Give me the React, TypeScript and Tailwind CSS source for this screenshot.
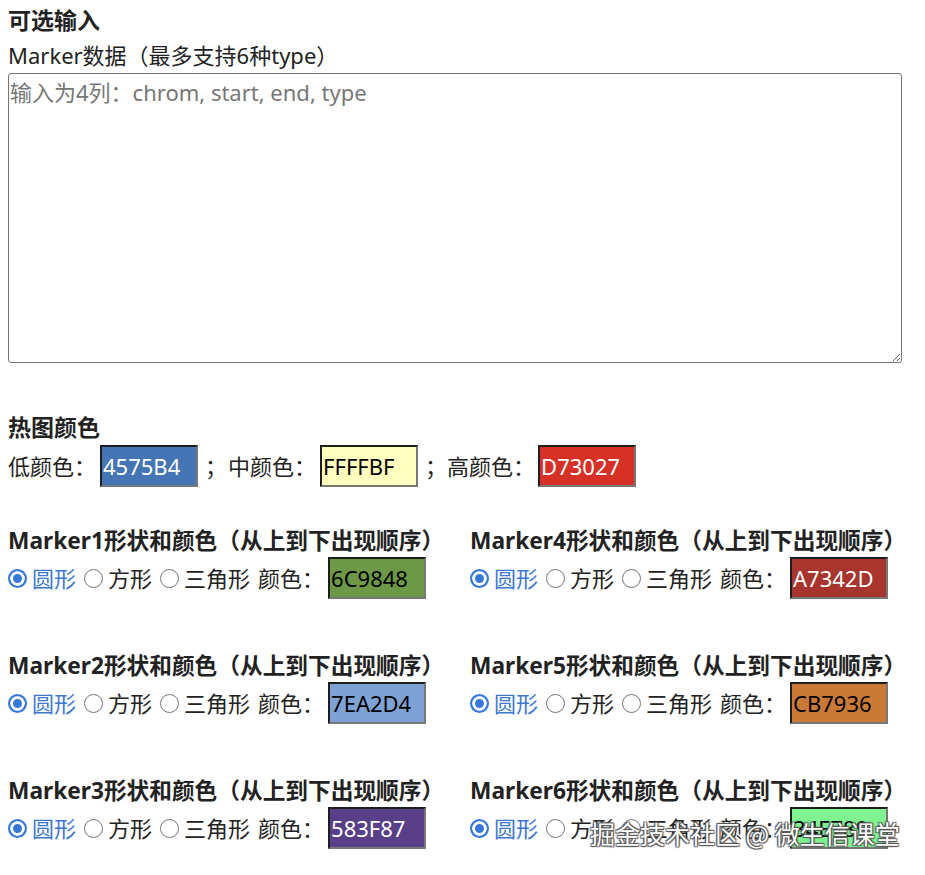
import React from "react";

type Marker = { id: number; color: string; dark: boolean };

const markers: Marker[] = [
  { id: 1, color: "6C9848", dark: false },
  { id: 4, color: "A7342D", dark: true },
  { id: 2, color: "7EA2D4", dark: false },
  { id: 5, color: "CB7936", dark: false },
  { id: 3, color: "583F87", dark: true },
  { id: 6, color: "34E789", dark: false },
];

const bgByColor: Record<string, string> = {
  "4575B4": "bg-[#4575B4]",
  FFFFBF: "bg-[#FFFFBF]",
  D73027: "bg-[#D73027]",
  "6C9848": "bg-[#6C9848]",
  A7342D: "bg-[#A7342D]",
  "7EA2D4": "bg-[#7EA2D4]",
  CB7936: "bg-[#CB7936]",
  "583F87": "bg-[#583F87]",
  "34E789": "bg-[#7EF38F]",
};

function ColorBox({ value, dark }: { value: string; dark: boolean }) {
  return (
    <input
      readOnly
      value={value}
      className={`w-[98px] h-[42px] px-[1px] text-[22px] leading-[38px] outline-none border-2 border-t-[#1e1e1e] border-l-[#1e1e1e] border-b-[#777] border-r-[#777] ${bgByColor[value]} ${dark ? "text-white" : "text-black"}`}
    />
  );
}

function Radio({ label, checked, name }: { label: string; checked?: boolean; name: string }) {
  return (
    <label className="flex items-center">
      <input
        type="radio"
        name={name}
        defaultChecked={checked}
        className="appearance-none w-[19px] h-[19px] m-0 mr-[5px] rounded-full border-[1.5px] border-[#767676] bg-white checked:border-2 checked:border-[#3578d8] checked:bg-[#3578d8] checked:shadow-[inset_0_0_0_3px_white]"
      />
      <span className={checked ? "text-[#3e78d0]" : ""}>{label}</span>
    </label>
  );
}

function MarkerBlock({ m }: { m: Marker }) {
  const name = `marker${m.id}`;
  return (
    <div className="h-[78px]">
      <div className="font-bold text-[22.7px] pt-[3px] leading-[33px] whitespace-nowrap">Marker{m.id}形状和颜色（从上到下出现顺序）</div>
      <div className="flex items-center h-[42px]">
        <Radio name={name} label="圆形" checked />
        <div className="w-[8px]" />
        <Radio name={name} label="方形" />
        <div className="w-[8px]" />
        <Radio name={name} label="三角形" />
        <span className="ml-[8px] mr-[4px]">颜色：</span>
        <ColorBox value={m.color} dark={m.dark} />
      </div>
    </div>
  );
}

export default function App() {
  return (
    <div className="relative w-[925px] h-[875px] bg-white text-[#222] text-[22px] font-['Noto_Sans','Noto_Sans_CJK_SC',sans-serif] px-[8px] pt-[2px]">
      <div className="font-bold text-[23px] leading-[36px]">可选输入</div>
      <div className="leading-[35px]">Marker数据（最多支持6种type）</div>
      <textarea
        placeholder="输入为4列：chrom, start, end, type"
        className="block w-[894px] h-[290px] border border-[#767676] rounded-[3px] px-[1px] py-[3px] leading-[30px] text-[22px] placeholder:text-[#777] outline-none"
      />

      <div className="mt-[46px] font-bold text-[23px] leading-[36px]">热图颜色</div>
      <div className="flex items-center h-[42px]">
        <span className="mr-[4px]">低颜色：</span>
        <ColorBox value="4575B4" dark />
        <span className="ml-[7px]">；</span>
        <span className="ml-[1px] mr-[4px]">中颜色：</span>
        <ColorBox value="FFFFBF" dark={false} />
        <span className="ml-[7px]">；</span>
        <span className="mr-[3px]">高颜色：</span>
        <ColorBox value="D73027" dark />
      </div>

      <div className="mt-[34px] grid grid-cols-[462px_1fr] gap-y-[47px]">
        {markers.map((m) => (
          <MarkerBlock key={m.id} m={m} />
        ))}
      </div>

      <div className="absolute left-[590px] top-[817px] text-[25px] leading-[32px] text-white font-['Noto_Sans_CJK_SC',sans-serif] [text-shadow:1px_1px_1px_#555,-1px_-1px_1px_#555,1px_-1px_1px_#555,-1px_1px_1px_#555] pointer-events-none">
        掘金技术社区 @ 微生信课堂
      </div>
    </div>
  );
}
